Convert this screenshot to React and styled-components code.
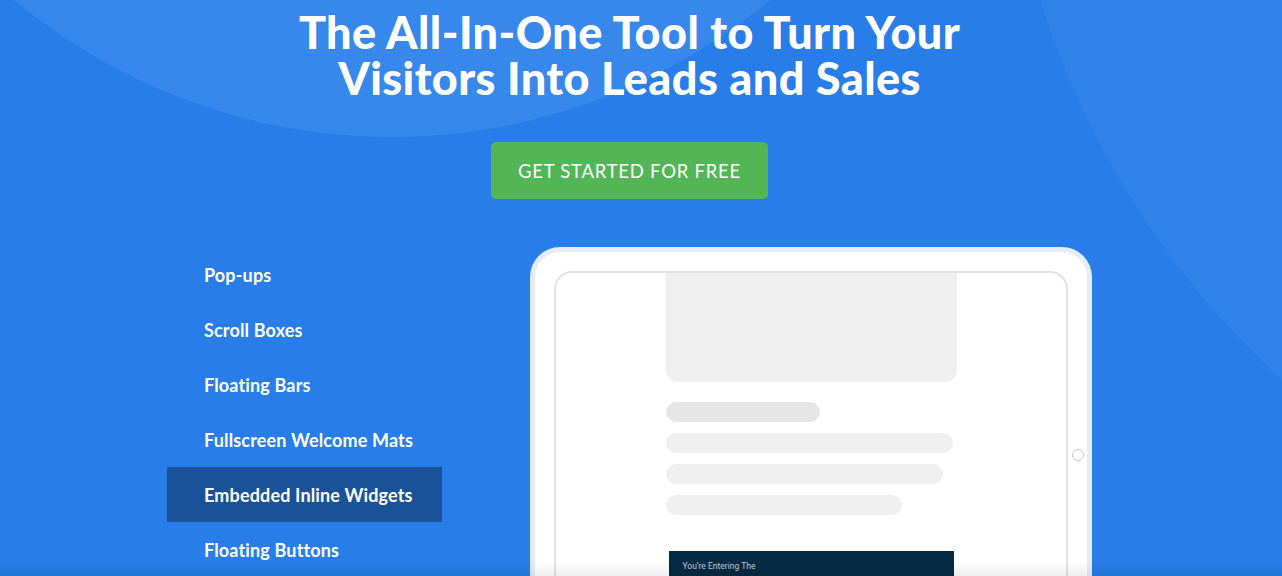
import React from "react";
import styled, { createGlobalStyle } from "styled-components";

const Global = createGlobalStyle`
  html, body { margin: 0; padding: 0; }
  body {
    background: #287de8;
    font-family: "Lato", "Liberation Sans", sans-serif;
    overflow: hidden;
  }
  * { box-sizing: border-box; }
`;

const Page = styled.div`
  position: relative;
  width: 1282px;
  height: 576px;
  overflow: hidden;
  background: #287de8;
`;

const Blob = styled.div`
  position: absolute;
  border-radius: 50%;
  background: ${(p) => p.$color};
  left: ${(p) => p.$x - p.$r}px;
  top: ${(p) => p.$y - p.$r}px;
  width: ${(p) => p.$r * 2}px;
  height: ${(p) => p.$r * 2}px;
  pointer-events: none;
`;

const BottomShade = styled.div`
  position: absolute;
  left: 0;
  right: 0;
  bottom: 0;
  height: 14px;
  background: linear-gradient(to bottom, rgba(0, 0, 0, 0), rgba(0, 0, 0, 0.07));
  pointer-events: none;
  z-index: 5;
`;

const Content = styled.div`
  position: relative;
  z-index: 1;
  width: 1259px;
  display: flex;
  flex-direction: column;
  align-items: center;
`;

const Title = styled.h1`
  margin: 9px 0 0;
  color: #fff;
  font-family: "Lato", "Liberation Sans", sans-serif;
  font-weight: 900;
  font-size: 45px;
  line-height: 46px;
  text-align: center;
  letter-spacing: 0.4px;
`;

const CTA = styled.a`
  margin-top: 41px;
  width: 277px;
  height: 57px;
  display: flex;
  align-items: center;
  justify-content: center;
  background: #52b656;
  border-radius: 5px;
  color: #fff;
  font-family: "Lato", "Liberation Sans", sans-serif;
  font-size: 18.5px;
  font-weight: 400;
  letter-spacing: 0.75px;
  text-decoration: none;
`;

const Showcase = styled.div`
  margin-top: 48px;
  width: 925px;
  display: flex;
  align-items: flex-start;
  gap: 88px;
`;

const Menu = styled.ul`
  list-style: none;
  margin: 0;
  padding: 0;
  width: 275px;
  flex: none;
`;

const MenuItem = styled.li`
  height: 55px;
  display: flex;
  align-items: center;
  padding-left: 37px;
  padding-top: 1px;
  color: #fff;
  font-family: "Lato", "Liberation Sans", sans-serif;
  font-weight: 700;
  font-size: 18px;
  letter-spacing: 0.15px;
  background: ${(p) => (p.$active ? "#1a5299" : "transparent")};
`;

const Device = styled.div`
  position: relative;
  flex: none;
  width: 562px;
  height: 360px;
  background: #fff;
  border: 5px solid #e3ecf7;
  border-bottom: none;
  border-radius: 30px 30px 0 0;
  padding: 19px 19px 0;
`;

const Screen = styled.div`
  height: 100%;
  border: 2px solid #e2e2e2;
  border-bottom: none;
  border-radius: 18px 18px 0 0;
  display: flex;
  flex-direction: column;
  align-items: center;
  overflow: hidden;
`;

const Column = styled.div`
  width: 291px;
  display: flex;
  flex-direction: column;
`;

const Hero = styled.div`
  height: 109px;
  background: #efefef;
  border-radius: 0 0 12px 12px;
`;

const Bars = styled.div`
  margin-top: 20px;
  display: flex;
  flex-direction: column;
  gap: 11px;
`;

const Bar = styled.div`
  height: 20px;
  border-radius: 10px;
  background: ${(p) => p.$color || "#efefef"};
`;

const DarkCard = styled.div`
  margin: 36px auto 0;
  width: 285px;
  height: 60px;
  background: #052a44;
  padding: 10px 14px;
  color: #c3ccd5;
  font-family: "Roboto", "Liberation Sans", sans-serif;
  font-size: 8.5px;
`;

const HomeButton = styled.div`
  position: absolute;
  right: 3px;
  top: 197px;
  width: 12px;
  height: 12px;
  border: 1.5px solid #c9c9c9;
  border-radius: 50%;
`;

const items = [
  "Pop-ups",
  "Scroll Boxes",
  "Floating Bars",
  "Fullscreen Welcome Mats",
  "Embedded Inline Widgets",
  "Floating Buttons",
];

export default function App() {
  return (
    <>
      <Global />
      <Page>
        <Blob $color="#3888ec" $x={392} $y={-453} $r={590} />
        <Blob $color="#3183ea" $x={1867} $y={-260} $r={867} />
        <Content>
          <Title>
            The All-In-One Tool to Turn Your
            <br />
            Visitors Into Leads and Sales
          </Title>
          <CTA href="#">GET STARTED FOR FREE</CTA>
          <Showcase>
            <Menu>
              {items.map((t) => (
                <MenuItem key={t} $active={t === "Embedded Inline Widgets"}>
                  {t}
                </MenuItem>
              ))}
            </Menu>
            <Device>
              <Screen>
                <Column>
                  <Hero />
                  <Bars>
                    <Bar $color="#e5e5e5" style={{ width: 154 }} />
                    <Bar style={{ width: 287 }} />
                    <Bar style={{ width: 277 }} />
                    <Bar style={{ width: 236 }} />
                  </Bars>
                </Column>
                <DarkCard>You’re Entering The</DarkCard>
              </Screen>
              <HomeButton />
            </Device>
          </Showcase>
        </Content>
        <BottomShade />
      </Page>
    </>
  );
}
